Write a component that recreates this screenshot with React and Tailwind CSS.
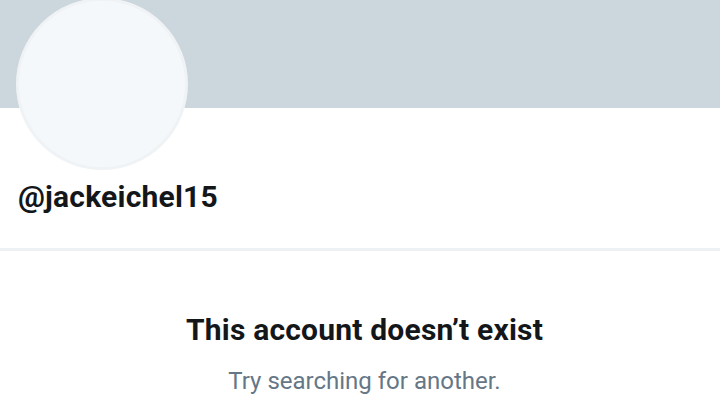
export default function App() {
  return (
    <div className="w-[720px] h-[405px] overflow-hidden bg-white" style={{ fontFamily: "Roboto, 'Liberation Sans', sans-serif" }}>
      <div className="relative h-[108px] bg-[#ccd6dd]">
        <div className="absolute left-[16px] top-[-2px] w-[172px] h-[172px] rounded-full bg-[#f5f8fa] border-[3px] border-[#f0f3f5]" />
      </div>
      <div className="h-[140px] px-[18px] pt-[71px]">
        <div className="text-[30px] font-bold text-[#14171a] leading-[36px] tracking-[0.2px]">@jackeichel15</div>
      </div>
      <div className="h-[3px] bg-[#eef1f3]" />
      <div className="flex flex-col items-center pt-[61px] pl-[9px]">
        <div className="text-[30px] font-bold text-[#14171a] leading-[36px] tracking-[0.2px]">This account doesn’t exist</div>
        <div className="mt-[19px] text-[24px] text-[#657786] leading-[28px]">Try searching for another.</div>
      </div>
    </div>
  );
}
